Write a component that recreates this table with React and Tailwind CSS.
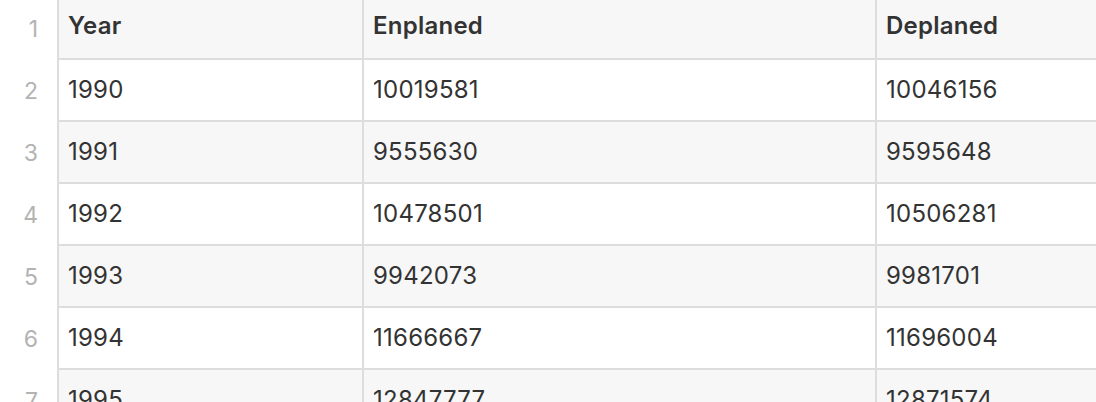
const rows = [
  ["1990", "10019581", "10046156"],
  ["1991", "9555630", "9595648"],
  ["1992", "10478501", "10506281"],
  ["1993", "9942073", "9981701"],
  ["1994", "11666667", "11696004"],
  ["1995", "12847777", "12871574"],
];

function Row({ n, cells, header, shaded }) {
  const bg = shaded ? "bg-[#f7f7f7]" : "bg-white";
  return (
    <div className="flex h-[62px]">
      <div className="w-[57px] shrink-0 flex items-center justify-end pr-[19px] text-[23px] text-[#b3b3b3] bg-white">
        {n}
      </div>
      {cells.map((c, i) => (
        <div
          key={i}
          className={`${i === 0 ? "w-[305px]" : i === 1 ? "w-[513px]" : "w-[400px]"} shrink-0 flex items-center pl-[9px] border-l-2 border-b-2 border-[#dddddd] tracking-[0.01em] ${bg} ${
            header ? "font-semibold pb-[4px]" : ""
          }`}
        >
          {c}
        </div>
      ))}
    </div>
  );
}

export default function App() {
  return (
    <div
      className="w-[1096px] h-[402px] overflow-hidden bg-white text-[#333333] text-[24px]"
      style={{ fontFamily: "Inter, 'Noto Sans', sans-serif" }}
    >
      <div className="-mt-[2px]">
        <Row n="1" cells={["Year", "Enplaned", "Deplaned"]} header shaded />
        {rows.map((r, i) => (
          <Row key={i} n={String(i + 2)} cells={r} shaded={i % 2 === 1} />
        ))}
      </div>
    </div>
  );
}
